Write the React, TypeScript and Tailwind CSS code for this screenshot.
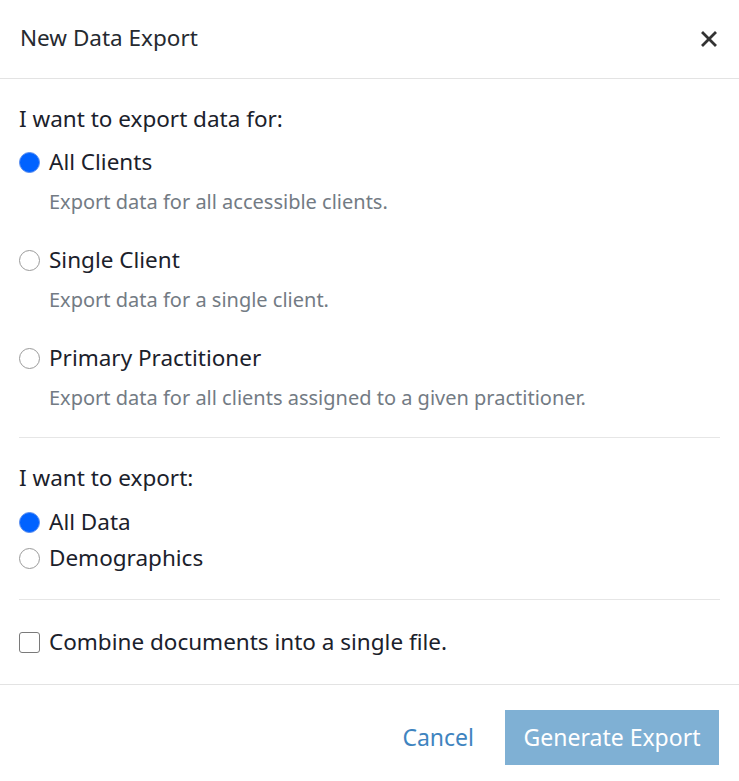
import { useState } from 'react';

const font = { fontFamily: '"Noto Sans", "Open Sans", sans-serif' };

interface RadioProps {
  checked: boolean;
  label: string;
  onSelect: () => void;
}

const Radio = ({ checked, label, onSelect }: RadioProps) => (
  <button type="button" onClick={onSelect} className="flex items-center h-[28px] text-left">
    {checked ? (
      <span className="w-[21px] h-[21px] rounded-full bg-[#0062ff] border border-[#5a8ef0] shrink-0" />
    ) : (
      <span className="w-[21px] h-[21px] rounded-full bg-white border border-[#9a9a9a] shrink-0" />
    )}
    <span className="ml-[9px] text-[22.5px] leading-[28px] text-[#1b212b]">{label}</span>
  </button>
);

const clientOptions = [
  { key: 'all', label: 'All Clients', desc: 'Export data for all accessible clients.' },
  { key: 'single', label: 'Single Client', desc: 'Export data for a single client.' },
  { key: 'primary', label: 'Primary Practitioner', desc: 'Export data for all clients assigned to a given practitioner.' },
];

const App = () => {
  const [scope, setScope] = useState('all');
  const [dataType, setDataType] = useState('all');
  const [combine, setCombine] = useState(false);

  return (
    <div className="w-[739px] h-[781px] bg-white overflow-hidden" style={font}>
      {/* Header */}
      <div className="h-[79px] flex items-center justify-between pl-[20px] pr-[22px] border-b border-[#e3e3e3]">
        <h2 className="text-[22.5px] text-[#262a30] -mt-[3px]">New Data Export</h2>
        <button type="button" aria-label="Close" className="-mt-[1px]">
          <svg width="16" height="16" viewBox="0 0 16 16">
            <path d="M2 2L14 14M14 2L2 14" stroke="#333" strokeWidth="2.8" strokeLinecap="square" />
          </svg>
        </button>
      </div>

      {/* Body */}
      <div className="px-[19px]">
        <div className="pt-[26px] pb-[26px] border-b border-[#e6e6e6]">
          <p className="text-[22.5px] leading-[28px] text-[#1b212b]">I want to export data for:</p>
          <div className="mt-[15px]">
            {clientOptions.map((opt, i) => (
              <div key={opt.key} className={i === 0 ? '' : 'mt-[31px]'}>
                <Radio checked={scope === opt.key} label={opt.label} onSelect={() => setScope(opt.key)} />
                <p className="mt-[13px] ml-[30px] text-[20px] leading-[26px] text-[#737b84]">{opt.desc}</p>
              </div>
            ))}
          </div>
        </div>

        <div className="pt-[26px] pb-[27px] border-b border-[#e6e6e6]">
          <p className="text-[22.5px] leading-[28px] text-[#1b212b]">I want to export:</p>
          <div className="mt-[16px] flex flex-col gap-[8px]">
            <Radio checked={dataType === 'all'} label="All Data" onSelect={() => setDataType('all')} />
            <Radio checked={dataType === 'demo'} label="Demographics" onSelect={() => setDataType('demo')} />
          </div>
        </div>

        <div className="pt-[28px] pb-[28px]">
          <label className="flex items-center h-[28px] cursor-pointer">
            <input
              type="checkbox"
              checked={combine}
              onChange={(e) => setCombine(e.target.checked)}
              className="sr-only"
            />
            <span className="w-[21px] h-[21px] rounded-[3px] border border-[#7a7a7a] bg-white shrink-0" />
            <span className="ml-[9px] text-[22.5px] leading-[28px] text-[#1b212b]">Combine documents into a single file.</span>
          </label>
        </div>
      </div>

      {/* Footer */}
      <div className="border-t border-[#e3e3e3] pt-[25px] pr-[20px] flex items-center justify-end">
        <button type="button" className="text-[23px] text-[#3f84bf] mr-[31px]">Cancel</button>
        <button
          type="button"
          disabled
          className="h-[55px] w-[214px] bg-[#7fb0d4] text-white text-[23px]"
        >
          Generate Export
        </button>
      </div>
    </div>
  );
};

export default App;
